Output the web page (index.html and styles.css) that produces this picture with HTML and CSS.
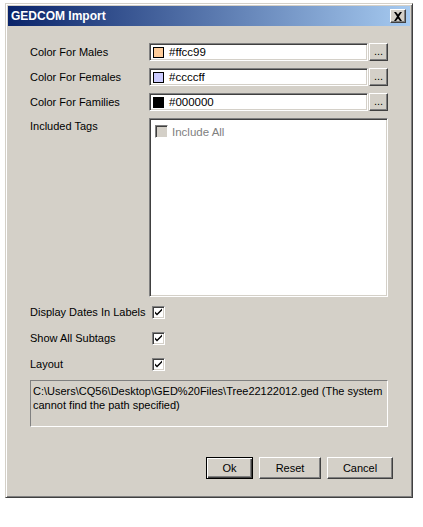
FILE: index.html
```html
<!DOCTYPE html>
<html>
<head>
<meta charset="utf-8">
<link rel="stylesheet" href="styles.css">
</head>
<body>
<div class="window">
  <div class="titlebar">
    <span class="title">GEDCOM Import</span>
    <span class="close"><svg width="10" height="9" viewBox="0 0 10 9"><path d="M1 0h2l2 2.5L7 0h2L6 4.5 9 9H7L5 6.5 3 9H1l3-4.5z" fill="#000"/></svg></span>
  </div>
  <div class="body">
    <div class="row">
      <div class="label">Color For Males</div>
      <div class="field"><span class="swatch" style="background:#ffcc99"></span><span>#ffcc99</span></div>
      <div class="dots">...</div>
    </div>
    <div class="row">
      <div class="label">Color For Females</div>
      <div class="field"><span class="swatch" style="background:#ccccff"></span><span>#ccccff</span></div>
      <div class="dots">...</div>
    </div>
    <div class="row">
      <div class="label">Color For Families</div>
      <div class="field"><span class="swatch" style="background:#000000"></span><span>#000000</span></div>
      <div class="dots">...</div>
    </div>
    <div class="tagrow">
      <div class="label tlabel">Included Tags</div>
      <div class="list">
        <div class="incall"><span class="dcheck"></span><span>Include All</span></div>
      </div>
    </div>
    <div class="checks">
      <div class="crow"><div class="label">Display Dates In Labels</div><span class="check"><svg width="9" height="9" viewBox="0 0 9 9"><path d="M1 3.5l2 2 5-5v2l-5 5-2-2z" fill="#000"/></svg></span></div>
      <div class="crow"><div class="label">Show All Subtags</div><span class="check"><svg width="9" height="9" viewBox="0 0 9 9"><path d="M1 3.5l2 2 5-5v2l-5 5-2-2z" fill="#000"/></svg></span></div>
      <div class="crow"><div class="label">Layout</div><span class="check"><svg width="9" height="9" viewBox="0 0 9 9"><path d="M1 3.5l2 2 5-5v2l-5 5-2-2z" fill="#000"/></svg></span></div>
    </div>
    <div class="error">C:\Users\CQ56\Desktop\GED%20Files\Tree22122012.ged (The system cannot find the path specified)</div>
    <div class="buttons">
      <div class="btn ok">Ok</div>
      <div class="btn reset">Reset</div>
      <div class="btn cancel">Cancel</div>
    </div>
  </div>
</div>
</body>
</html>
```
FILE: styles.css
```css
html, body { margin: 0; padding: 0; background: #fff; }
body {
  font-family: "Liberation Sans", Arial, sans-serif;
  font-size: 11px;
  color: #000;
}
.window {
  margin: 3px 0 0 5px;
  width: 408px;
  height: 495px;
  box-sizing: border-box;
  background: #d4d0c8;
  border-top: 1px solid #d4d0c8;
  border-left: 1px solid #d4d0c8;
  border-right: 1px solid #404040;
  border-bottom: 1px solid #404040;
  box-shadow: inset 1px 1px 0 #fff, inset -1px -1px 0 #808080;
  padding: 2px 2px 2px 2px;
  display: flex;
  flex-direction: column;
}
.titlebar {
  height: 20px;
  background: linear-gradient(to right, #0a246a, #a6caf0);
  display: flex;
  align-items: center;
  justify-content: space-between;
  padding: 0 4px 0 3px;
}
.title {
  color: #fff;
  font-weight: bold;
  font-family: "Liberation Sans", Arial, sans-serif;
  font-size: 12px;
}
.close {
  width: 16px;
  height: 14px;
  box-sizing: border-box;
  background: #d4d0c8;
  border-top: 1px solid #fff;
  border-left: 1px solid #fff;
  border-right: 1px solid #404040;
  border-bottom: 1px solid #404040;
  box-shadow: inset -1px -1px 0 #808080;
  display: flex;
  align-items: center;
  justify-content: center;
}
.body {
  padding: 17px 22px 0 22px;
  display: flex;
  flex-direction: column;
}
.row {
  display: flex;
  align-items: center;
  height: 18px;
  margin-bottom: 7px;
}
.label {
  width: 119px;
  flex: none;
}
.field {
  width: 220px;
  height: 18px;
  box-sizing: border-box;
  background: #fff;
  border-top: 1px solid #808080;
  border-left: 1px solid #808080;
  border-right: 1px solid #fff;
  border-bottom: 1px solid #fff;
  box-shadow: inset 1px 1px 0 #404040, inset -1px -1px 0 #d4d0c8;
  display: flex;
  align-items: center;
  padding-left: 3px;
  font-size: 11.5px;
}
.swatch {
  width: 11px;
  height: 11px;
  border: 1px solid #000;
  box-sizing: border-box;
  margin-right: 5px;
}
.dots {
  width: 19px;
  height: 18px;
  margin-left: 1px;
  box-sizing: border-box;
  border-top: 1px solid #fff;
  border-left: 1px solid #fff;
  border-right: 1px solid #404040;
  border-bottom: 1px solid #404040;
  box-shadow: inset -1px -1px 0 #808080;
  text-align: center;
  line-height: 14px;
}
.tagrow {
  display: flex;
  align-items: flex-start;
}
.tlabel { padding-top: 2px; }
.list {
  width: 240px;
  height: 179px;
  box-sizing: border-box;
  background: #fff;
  border-top: 1px solid #808080;
  border-left: 1px solid #808080;
  border-right: 1px solid #fff;
  border-bottom: 1px solid #fff;
  box-shadow: inset 1px 1px 0 #404040, inset -1px -1px 0 #d4d0c8;
  padding: 6px 0 0 5px;
}
.incall {
  display: flex;
  align-items: center;
  color: #808080;
  font-size: 11.5px;
}
.dcheck {
  width: 13px;
  height: 13px;
  box-sizing: border-box;
  background: #d4d0c8;
  border-top: 1px solid #808080;
  border-left: 1px solid #808080;
  border-right: 1px solid #fff;
  border-bottom: 1px solid #fff;
  box-shadow: inset 1px 1px 0 #404040;
  margin-right: 4px;
}
.checks {
  padding-top: 5px;
  display: flex;
  flex-direction: column;
  gap: 6px;
}
.crow {
  display: flex;
  align-items: center;
  height: 20px;
}
.crow .label { width: 122px; }
.check {
  width: 13px;
  height: 13px;
  box-sizing: border-box;
  background: #fff;
  border-top: 1px solid #808080;
  border-left: 1px solid #808080;
  border-right: 1px solid #fff;
  border-bottom: 1px solid #fff;
  box-shadow: inset 1px 1px 0 #404040, inset -1px -1px 0 #d4d0c8;
  display: flex;
  align-items: center;
  justify-content: center;
}
.error {
  margin-top: 6px;
  width: 358px;
  height: 47px;
  box-sizing: border-box;
  border-top: 1px solid #808080;
  border-left: 1px solid #808080;
  border-right: 1px solid #fff;
  border-bottom: 1px solid #fff;
  padding: 3px 4px 0 2px;
  line-height: 14px;
}
.buttons {
  margin-top: 30px;
  margin-right: -5px;
  display: flex;
  justify-content: flex-end;
  gap: 6px;
}
.btn {
  height: 22px;
  box-sizing: border-box;
  border-top: 1px solid #fff;
  border-left: 1px solid #fff;
  border-right: 1px solid #404040;
  border-bottom: 1px solid #404040;
  box-shadow: inset -1px -1px 0 #808080;
  display: flex;
  align-items: center;
  justify-content: center;
}
.ok { width: 47px; border: 1px solid #000; box-shadow: inset 1px 1px 0 #fff, inset -1px -1px 0 #404040, inset -2px -2px 0 #808080; }
.reset { width: 62px; }
.cancel { width: 66px; }
```
